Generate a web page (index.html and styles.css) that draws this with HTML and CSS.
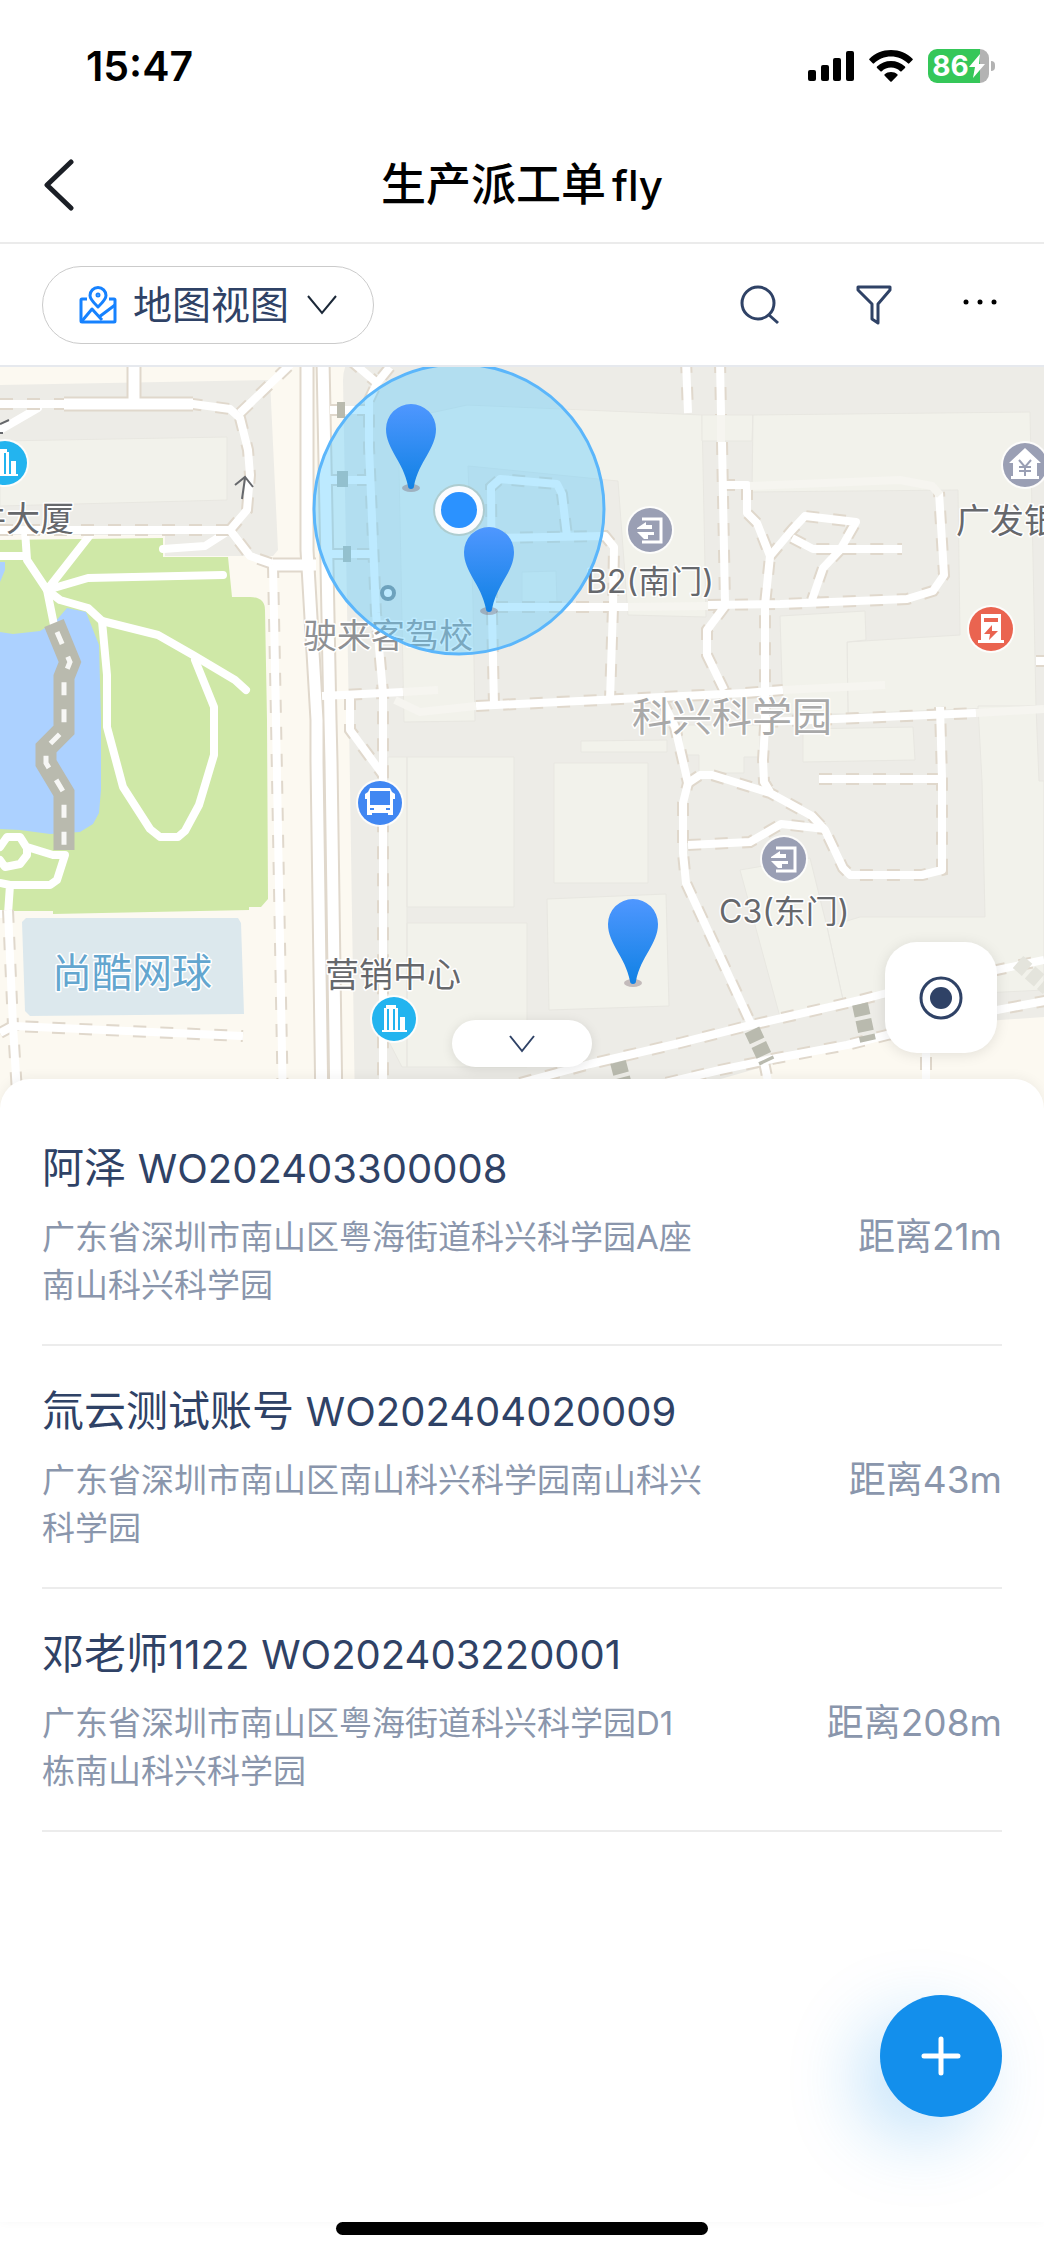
FILE: index.html
```html
<!DOCTYPE html>
<html lang="zh-CN">
<head>
  <meta charset="UTF-8" />
  <meta name="viewport" content="width=device-width, initial-scale=1.0"/>
  <title>生产派工单fly</title>
  <link rel="stylesheet" href="styles.css">
</head>
<body>
  <div class="status-bar">
    <span class="time">15:47</span>
    <div class="status-icons">
      <svg width="46" height="30" viewBox="0 0 46 30">
        <rect x="0" y="19" width="8" height="11" rx="2"/>
        <rect x="13" y="14" width="8" height="16" rx="2"/>
        <rect x="25" y="7" width="8" height="23" rx="2"/>
        <rect x="38" y="0" width="8" height="30" rx="2"/>
      </svg>
      <svg width="44" height="32" viewBox="0 0 44 32">
        <path d="M22 0C13.500 0 6 3.200.500 8.700a1 1 0 0 0 0 1.400l3.200 3.200a1 1 0 0 0 1.400 0C9.600 9 15.500 6.500 22 6.500S34.400 9 38.900 13.300a1 1 0 0 0 1.400 0l3.200-3.200a1 1 0 0 0 0-1.400C38 3.200 30.500 0 22 0z"/>
        <path d="M22 11c-5.400 0-10.300 2-14 5.500a1 1 0 0 0 0 1.400l3.400 3.300a1 1 0 0 0 1.400 0c2.500-2.300 5.700-3.600 9.200-3.600s6.700 1.300 9.200 3.600a1 1 0 0 0 1.400 0l3.400-3.300a1 1 0 0 0 0-1.400C32.300 13 27.400 11 22 11z"/>
        <path d="M22 22c-2.400 0-4.600.9-6.300 2.300a1 1 0 0 0 0 1.400l5.600 5.700a1 1 0 0 0 1.400 0l5.600-5.700a1 1 0 0 0 0-1.400C26.600 22.900 24.400 22 22 22z"/>
      </svg>
      <div class="battery">
        <span>86</span>
        <svg width="16" height="24" viewBox="0 0 16 24"><path d="M11 0 0 13h6L4 24 16 10H10z"/></svg>
      </div>
    </div>
  </div>

  <header class="title-bar">
    <button class="back" aria-label="返回">
      <svg width="32" height="52" viewBox="0 0 32 52"><path d="M28 3 4 26l24 23"/></svg>
    </button>
    <h1>生产派工单<span>fly</span></h1>
  </header>

  <div class="toolbar">
    <label class="view-switch">
      <svg class="map-icon" width="38" height="38" viewBox="0 0 38 38">
        <path d="M8 13H3a1 1 0 0 0-1 1v21a1 1 0 0 0 1 1h32a1 1 0 0 0 1-1V14a1 1 0 0 0-1-1h-5"/>
        <path d="M19 21C15 17 11 13.500 11 9.500a8 8 0 0 1 16 0C27 13.500 23 17 19 21z"/>
        <circle cx="19" cy="9" r="1"/>
        <path d="M3 35 13 23 23 34M20 31 36 19"/>
      </svg>
      <select aria-label="视图">
        <option>地图视图</option>
      </select>
      <svg class="arrow" width="30" height="20" viewBox="0 0 30 20"><path d="M1 1l14 17L29 1"/></svg>
    </label>
    <div class="tools">
      <button aria-label="搜索">
        <svg width="40" height="40" viewBox="0 0 40 40"><circle cx="18" cy="18" r="16"/><path d="m29 30 9 8"/></svg>
      </button>
      <button aria-label="筛选">
        <svg width="36" height="40" viewBox="0 0 36 40"><path d="M2 2h32v3L22 19v19l-6-4V19L2 5z"/></svg>
      </button>
      <button class="more" aria-label="更多">
        <svg width="34" height="16" viewBox="0 0 34 16"><circle cx="3" cy="5" r="2.500"/><circle cx="17" cy="5" r="2.500"/><circle cx="31" cy="5" r="2.500"/></svg>
      </button>
    </div>
  </div>

  <section class="map">
    <svg class="map-canvas" viewBox="0 367 1044 743" preserveAspectRatio="xMidYMid slice">
      <defs>
        <linearGradient id="pinFill" x1="0" y1="0" x2="0" y2="1">
          <stop offset="0" stop-color="#4f97ff"/>
          <stop offset="1" stop-color="#1081e4"/>
        </linearGradient>
        <g id="pin">
          <ellipse cx="0" cy="0" rx="9" ry="4" fill="#7c6a72" fill-opacity=".4"/>
          <path fill="url(#pinFill)" d="M-3-2C-8-27-25-39-25-59a25 25 0 0 1 50 0C25-39 8-27 3-2a3 3 0 0 1-6 0z"/>
        </g>
        <g id="building">
          <circle r="24" fill="#fff" fill-opacity=".8"/>
          <circle r="22" fill="#23b4ef"/>
          <path fill="#fff" d="M-12 13h25v-2h-2V-2H6v13H4v-22H2v-3H-8v3h-2v22h-2zM-7-10h2v21h-2zM-1-10h2v21h-2z"/>
        </g>
        <g id="gate">
          <circle r="24" fill="#fff" fill-opacity=".8"/>
          <circle r="22" fill="#9a9fb4"/>
          <path fill="none" stroke="#fff" stroke-width="3" d="M-8-11H11V12H-8"/>
          <path fill="#fff" d="M-13-2-4-8v3h6v4h-15zM-13 2H4v3h-6v4h-4z"/>
        </g>
        <!-- streets with a solid edge -->
        <g id="mainRoads">
          <path d="M307 360V550L317 720V762L322 1110"/>
          <path d="M323 360 330 720 331 762 336 1110"/>
          <path d="M134 360V404"/>
          <path d="M64 404H193"/>
          <path d="M273 565H316"/>
        </g>
        <!-- lanes with a dashed edge -->
        <g id="lanes">
          <path d="M0 404H193L230 409 240 418 248 450 250 475 247 510 230 530 250 556 273 564"/>
          <path d="M240 413 295 360"/>
          <path d="M0 530H230"/>
          <path d="M273 565 276 720 283 1110"/>
          <path d="M8 910 13 1026 18 1110"/>
          <path d="M0 1033 13 1026 243 1036"/>
          <path d="M390 367 377 383 369 400V447L376 613 383 693V1110M350 360 377 383"/>
          <path d="M322 696 403 692M350 697V730L383 775"/>
          <path d="M330 410H369M330 480H370M330 554H374"/>
          <path d="M476 706 600 700 745 693 783 690"/>
          <path d="M494 706 492 613 491 487 500 479 557 484 562 494 567 536"/>
          <path d="M493 538 605 536 614 547 613 607 610 700"/>
          <path d="M495 607H628"/>
          <path d="M686 360 688 413M720 360 721 415M722 442 725 605"/>
          <path d="M722 485H747V513L757 523 770 556 765 605V727L763 760 764 782 770 792"/>
          <path d="M770 556 792 530 805 516 856 522 840 550 823 568 812 600"/>
          <path d="M792 538 813 549H902"/>
          <path d="M708 605 780 604 907 599 933 591 944 575 939 492"/>
          <path d="M725 606 707 630V655L724 690"/>
          <path d="M662 700 675 727 688 783 683 803V853L686 883 752 1026"/>
          <path d="M688 783 700 775H712L770 793 812 816 825 830 843 868 850 875H922L942 870V779L940 707"/>
          <path d="M688 845 750 842 781 824 825 829"/>
          <path d="M819 779H942"/>
          <path d="M765 722 976 713M1036 661H1050"/>
          <path d="M520 1083 590 1064 680 1043 747 1026 860 1000 887 993 1044 960"/>
          <path d="M640 1089 720 1070 777 1058 847 1045 887 1035 997 1010 1050 1000"/>
          <path d="M926 1030V1110M764 1062 774 1110"/>
        </g>
      </defs>

      <rect class="ground" y="360" width="1044" height="760"/>

      <g class="block">
        <path d="M0 385 270 380 278 550 273 556H165V535H0z"/>
        <path d="M349 360Q343 368 343 380L349 720 355 1110H600L700 1085 780 1062 870 1035 1000 1020 1044 1017V360z"/>
      </g>
      <path class="grass" d="M0 540 163 538V557H228L232 597H250Q265 597 265 610L267 720 268 899 261 907H249V910L53 914V911H0z"/>
      <path class="water" d="M0 562H5V570L0 582zM0 632 13 634 40 631 55 622 67 608 86 612 99 645 101 720V790L99 813 93 824 80 832 50 834 20 830 0 829z"/>
      <path class="court" d="M22 922 26 918H238L241 923 244 1014 30 1016 25 1011z"/>

      <g class="house">
        <path d="M0 441 227 437V500L0 506z"/>
        <path d="M398 418 435 412 467 405 702 415 706 617 628 615 618 481 468 466 473 600 475 721 404 722z"/>
        <path d="M522 572 556 571 557 602H522z"/>
        <path d="M702 415H753L752 441H702z"/>
        <path d="M753 415 1030 412 1036 706 848 714 847 642 960 635 958 490 752 492z"/>
        <path d="M780 616 865 611 866 640 847 642 848 714H783z"/>
        <path d="M803 729 913 727 915 760 803 762z"/>
        <path d="M682 725H760V757H744V773H699V755H682z"/>
        <path d="M978 706 1036 706 1039 781H1044V990L843 1000 827 927 860 917H985L982 781z"/>
        <path d="M740 870 810 858 827 927 843 1000 780 1017z"/>
        <path d="M388 757H407V1067H402L388 1040zM407 757H514V907H407zM407 923H527V1067H407z"/>
        <path d="M554 763H648V883H554zM547 899 666 894 669 1006 549 1010zM581 741 667 740V752H581z"/>
      </g>

      <g class="park-paths">
        <path d="M25 530 27 560 47 590 54 625M0 556H26M90 535 47 590 88 578 223 575"/>
        <path d="M47 590 60 600 88 608 102 621 158 635 193 655 235 680 246 690"/>
        <path d="M102 621 107 675V727L123 787 150 829 160 837H178L185 831 199 805 214 755V707L195 660"/>
        <path d="M0 847 7 837H20L27 848V855L20 864 5 867 0 860M27 847 53 855H65L57 880 50 885H10L0 883M10 885 8 914H0"/>
        <path d="M230 530 205 546 163 549M38 408 0 430"/>
      </g>

      <use href="#mainRoads" class="main-edge"/>
      <use href="#lanes" class="lane-edge"/>
      <use href="#lanes" class="lane"/>
      <use href="#mainRoads" class="main-road"/>
      <path class="lane-pale" d="M395 700 420 712 476 706M403 692 438 690M721 415V442M783 690 885 685M750 486 900 480 932 486 940 495M628 607 708 606M976 713 1044 709"/>

      <path class="bridge" d="M54 623 70 662 64 677V730L46 748V763L64 793V850"/>
      <path class="bridge-dash" d="M57 632 70 662 64 677V730L46 748V763L64 793V850"/>
      <g class="gatehouse">
        <path d="M337 402h8v16h-8zM337 471h11v16h-11zM343 546h8v16h-8z"/>
      </g>
      <path class="crossing" d="M752 1030 767 1062M860 1004 868 1041M618 1062 624 1085"/>
      <path class="crossing pale" d="M1018 962 1048 988"/>

      <path class="one-way" d="M242 499 245 478M235 485 245 477 253 487M0 424 9 420M0 433h3"/>

      <g class="poi">
        <use href="#building" x="5" y="463"/>
        <use href="#building" x="394" y="1019"/>
        <use href="#gate" x="650" y="530"/>
        <use href="#gate" x="784" y="859"/>
        <g transform="translate(380 803)">
          <circle r="24" fill="#fff" fill-opacity=".8"/>
          <circle r="22" fill="#4187f2"/>
          <path fill="#fff" fill-rule="evenodd" d="M-10-15h20l2 4 3 2v5h-2V12H8v-2H-8v2h-5V-4h-2v-5l3-2zM-10-12V2h20v-14zM-10 5v2h4V5zM6 5v2h4V5z"/>
        </g>
        <g transform="translate(1025 465)">
          <circle r="24" fill="#fff" fill-opacity=".8"/>
          <circle r="22" fill="#9a9fb4"/>
          <path fill="#fff" d="M0-17 16-2h-4v13h2v3h-28v-3h2V-2h-4z"/>
          <path fill="none" stroke="#9a9fb4" stroke-width="2" d="m-6-5 6 7 6-7M0 2v9M-6 2H6M-6 6H6"/>
        </g>
        <g transform="translate(991 629)">
          <circle r="24" fill="#fff" fill-opacity=".8"/>
          <circle r="22" fill="#ea6450"/>
          <path fill="#fff" fill-rule="evenodd" d="M-10-15H10v26h3v3h-26v-3h3zM-7-11v4H7v-4zM1-4-7 5h6l-1 6L7 2H1z"/>
        </g>
        <circle cx="388" cy="593" r="6" fill="#fff" stroke="#7b8791" stroke-width="4"/>
      </g>

      <g class="labels">
        <text x="74" y="531" text-anchor="end">件大厦</text>
        <text x="303" y="648" class="soft">驶来客驾校</text>
        <text x="586" y="593" class="small">B2(南门)</text>
        <text x="719" y="923" class="small">C3(东门)</text>
        <text x="325" y="987">营销中心</text>
        <text x="956" y="533">广发银行</text>
        <text x="632" y="731" class="area">科兴科学园</text>
        <text x="52" y="987" class="area sport">尚酷网球</text>
      </g>

      <circle class="radius" cx="459" cy="509" r="145"/>
      <circle cx="459" cy="510" r="26" fill="#a09a80" fill-opacity=".3"/>
      <circle cx="459" cy="510" r="24" fill="#fafcff"/>
      <circle cx="459" cy="510" r="18" fill="#2b92ff"/>
      <use href="#pin" x="411" y="488"/>
      <use href="#pin" x="489" y="611"/>
      <use href="#pin" x="633" y="983"/>
    </svg>

    <button class="collapse" aria-label="收起">
      <svg width="26" height="18" viewBox="0 0 26 18"><path d="M1 1l12 15L25 1"/></svg>
    </button>
    <button class="locate" aria-label="定位">
      <svg width="46" height="46" viewBox="0 0 46 46"><circle class="ring" cx="23" cy="23" r="20"/><circle cx="23" cy="23" r="11"/></svg>
    </button>
  </section>

  <main class="sheet">
    <article class="order">
      <h2>阿泽 <span>WO202403300008</span></h2>
      <div class="order-info">
        <p class="address">广东省深圳市南山区粤海街道科兴科学园A座南山科兴科学园</p>
        <span class="distance">距离21m</span>
      </div>
    </article>
    <article class="order">
      <h2>氚云测试账号 <span>WO202404020009</span></h2>
      <div class="order-info">
        <p class="address">广东省深圳市南山区南山科兴科学园南山科兴科学园</p>
        <span class="distance">距离43m</span>
      </div>
    </article>
    <article class="order">
      <h2>邓老师<span>1122</span> <span>WO202403220001</span></h2>
      <div class="order-info">
        <p class="address">广东省深圳市南山区粤海街道科兴科学园D1栋南山科兴科学园</p>
        <span class="distance">距离208m</span>
      </div>
    </article>
  </main>

  <button class="add" aria-label="新建">
    <svg width="40" height="40" viewBox="0 0 40 40"><path d="M20 3v34M3 20h34"/></svg>
  </button>
  <div class="home-indicator"></div>
</body>
</html>
```

FILE: styles.css
```css
* {
  box-sizing: border-box;
}

body {
  margin: 0;
  min-height: 100vh;
  display: flex;
  flex-direction: column;
  font-family: Inter, 'Noto Sans CJK SC', sans-serif;
  background-color: #fff;
  color: #2f4266;
}

h1, h2, p {
  margin: 0;
  font-weight: 400;
}

svg {
  display: block;
  flex-shrink: 0;
}

button {
  display: flex;
  align-items: center;
  justify-content: center;
  padding: 0;
  border: 0;
  background: none;
  cursor: pointer;
}

/* status bar */
.status-bar {
  display: flex;
  justify-content: space-between;
  align-items: center;
  height: 122px;
  padding: 10px 49px 0 86px;
  color: #000;
}

.time {
  font-size: 41px;
  font-weight: 600;
}

.status-icons {
  display: flex;
  align-items: center;
  gap: 15px;
}

.battery {
  display: flex;
  align-items: center;
  justify-content: center;
  width: 61px;
  height: 34px;
  margin-right: 6px;
  border-radius: 9px;
  background: linear-gradient(to right, #35c759 85%, #b3b3b3 85%);
  color: #fff;
  font-size: 28px;
  font-weight: 700;
  position: relative;
}

.battery svg {
  fill: #fff;
}

.battery::after {
  content: '';
  position: absolute;
  right: -6px;
  top: 12px;
  width: 4px;
  height: 10px;
  border-radius: 0 4px 4px 0;
  background: #b3b3b3;
}

/* title */
.title-bar {
  display: grid;
  grid-template-columns: 80px 1fr 80px;
  align-items: center;
  height: 122px;
  padding: 6px 0 0;
  border-bottom: 2px solid #ebebeb;
}

.title-bar h1 {
  font-size: 45px;
  line-height: 60px;
  font-weight: 500;
  text-align: center;
  color: #000;
}

.title-bar h1 span {
  margin-left: 6px;
  font-size: 42px;
}

.back {
  justify-content: flex-start;
}

.back svg {
  margin-left: 43px;
  fill: none;
  stroke: #1b1f26;
  stroke-width: 5;
  stroke-linecap: round;
  stroke-linejoin: round;
}

/* toolbar */
.toolbar {
  display: flex;
  justify-content: space-between;
  align-items: center;
  height: 123px;
  padding: 0 47px 0 42px;
  border-bottom: 2px solid #e6e9ee;
}

.view-switch {
  display: flex;
  align-items: center;
  height: 78px;
  padding: 0 36px;
  border: 1px solid #cbcbcb;
  border-radius: 39px;
}

.view-switch select {
  appearance: none;
  margin: 0 17px 0 16px;
  padding: 0;
  border: 0;
  background: none;
  font-family: inherit;
  font-size: 39px;
  line-height: 58px;
  color: #2f4266;
}

.map-icon {
  fill: none;
  stroke: #1682ff;
  stroke-width: 3;
  stroke-linejoin: round;
}

.arrow {
  fill: none;
  stroke: #1b2838;
  stroke-width: 2;
}

.tools {
  display: flex;
  align-items: center;
}

.tools svg {
  fill: none;
  stroke: #2f4266;
  stroke-width: 3;
  stroke-linejoin: round;
}

.tools button + button {
  margin-left: 76px;
}

.tools button.more {
  margin-left: 71px;
}

.tools .more svg {
  fill: #000;
  stroke: none;
}

/* map */
.map {
  position: relative;
  height: 743px;
  overflow: hidden;
}

.map-canvas {
  width: 100%;
  height: 100%;
}

.ground {
  fill: #fcf9f1;
}

.block {
  fill: #edece7;
}

.house {
  fill: #f2f2eb;
  stroke: #e8e7e1;
  stroke-width: 1;
}

.grass {
  fill: #cfe8a7;
}

.water {
  fill: #acd1ff;
}

.court {
  fill: #dce8ed;
}

.park-paths {
  fill: none;
  stroke: #fff;
  stroke-width: 8;
  stroke-linecap: round;
  stroke-linejoin: round;
}

.main-edge {
  fill: none;
  stroke: #e0d8cc;
  stroke-width: 15;
}

.main-road {
  fill: none;
  stroke: #fff;
  stroke-width: 11;
}

.lane-edge {
  fill: none;
  stroke: #e0d8cc;
  stroke-width: 12;
  stroke-dasharray: 13 14;
}

.lane {
  fill: none;
  stroke: #fff;
  stroke-width: 8;
  stroke-linejoin: round;
}

.lane-pale {
  fill: none;
  stroke: #f6f5f0;
  stroke-width: 8;
}

.bridge {
  fill: none;
  stroke: #b9baae;
  stroke-width: 21;
}

.bridge-dash {
  fill: none;
  stroke: #f7f7f5;
  stroke-width: 5;
  stroke-dasharray: 13 14;
}

.gatehouse {
  fill: #b9baae;
}

.crossing {
  fill: none;
  stroke: #b9baae;
  stroke-width: 16;
  stroke-dasharray: 12 4;
}

.crossing.pale {
  stroke: #e4e4dc;
}

.one-way {
  fill: none;
  stroke: #66686c;
  stroke-width: 2;
}

.labels {
  font-family: Inter, 'Noto Sans CJK SC', sans-serif;
  font-size: 34px;
  fill: #66686c;
  stroke: #fff;
  stroke-width: 3;
  stroke-linejoin: round;
  paint-order: stroke;
}

.labels .small {
  font-size: 32px;
}

.labels .soft {
  fill: #8f9194;
}

.labels .area {
  font-size: 40px;
  fill: #a9a9a9;
}

.labels .sport {
  fill: #63a6cf;
}

.radius {
  fill: #5acaff;
  fill-opacity: .4;
  stroke: #5bb6fb;
  stroke-width: 3;
}

.collapse {
  position: absolute;
  left: 50%;
  bottom: 43px;
  width: 140px;
  height: 47px;
  margin-left: -70px;
  border-radius: 24px;
  background: #fff;
  box-shadow: 0 2px 12px rgba(0, 0, 0, 0.1);
}

.collapse svg {
  fill: none;
  stroke: #2f4266;
  stroke-width: 2;
}

.locate {
  position: absolute;
  right: 47px;
  bottom: 57px;
  width: 112px;
  height: 111px;
  border-radius: 32px;
  background: #fff;
  box-shadow: 0 2px 14px rgba(0, 0, 0, 0.1);
}

.locate svg {
  fill: #2f4266;
}

.locate .ring {
  fill: none;
  stroke: #2f4266;
  stroke-width: 3;
}

/* work orders */
.sheet {
  flex: 1;
  position: relative;
  margin-top: -31px;
  padding: 24px 42px 0;
  border-radius: 30px 30px 0 0;
  background: #fff;
  box-shadow: 0 -2px 12px rgba(0, 0, 0, 0.05);
}

.order {
  padding: 41px 0 35px;
  border-bottom: 2px solid #ececec;
}

.order h2 {
  font-size: 42px;
  line-height: 48px;
}

.order h2 span {
  font-size: 40px;
  line-height: 1;
}

.order-info {
  display: flex;
  justify-content: space-between;
  margin-top: 21px;
  line-height: 48px;
  color: #8a96ac;
}

.address {
  width: 20em;
  font-size: 33px;
}

.distance {
  font-size: 37px;
}

.add {
  position: fixed;
  right: 42px;
  bottom: 140px;
  width: 122px;
  height: 122px;
  border-radius: 50%;
  background: #138fec;
  box-shadow: -22px 22px 70px rgba(19, 143, 236, 0.25);
}

.add svg {
  fill: none;
  stroke: #fff;
  stroke-width: 5;
  stroke-linecap: round;
}

.home-indicator {
  position: relative;
  width: 372px;
  height: 13px;
  margin: 0 auto 22px;
  border-radius: 7px;
  background: #000;
}
```
